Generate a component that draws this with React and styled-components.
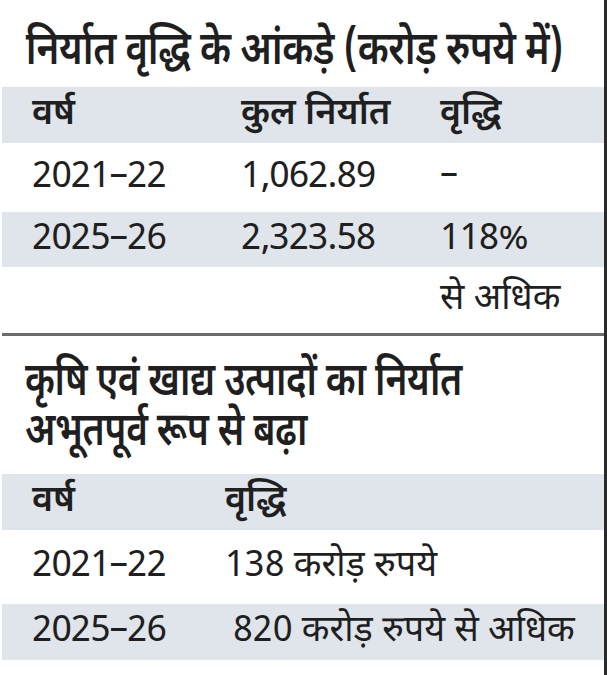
import React from 'react';
import styled, { createGlobalStyle } from 'styled-components';

const GlobalStyle = createGlobalStyle`
    html, body {
        margin: 0;
        padding: 0;
        background: #fff;
    }
    body {
        font-family: "Noto Sans Devanagari", "Lohit Devanagari", "Noto Sans", "Liberation Sans", sans-serif;
        color: #1f1f1f;
    }
`;

const Card = styled.div`
    margin-left: 2px;
    width: 602px;
    height: 675px;
    border-right: 3px solid #2a2a2a;
    background: #fff;
    display: flex;
    flex-direction: column;
    overflow: hidden;
`;

// newspaper headline face is condensed, so squeeze the heading horizontally
const Title = styled.h1`
    margin: 0;
    box-sizing: border-box;
    flex: 0 0 ${(p) => p.$h}px;
    padding: ${(p) => p.$top}px 0 0 29px;
    font-size: 47px;
    font-weight: 600;
    line-height: 50px;
    letter-spacing: -0.5px;
    white-space: nowrap;
    transform: scaleX(${(p) => p.$squeeze});
    transform-origin: left top;
`;

const Row = styled.div`
    display: grid;
    grid-template-columns: ${(p) => p.$cols};
    align-items: center;
    flex: 0 0 ${(p) => p.$h}px;
    padding-left: 30px;
    background: ${(p) => (p.$shade ? '#dfe5ea' : 'transparent')};
    font-size: 36px;
    font-weight: ${(p) => (p.$head ? 600 : 400)};
    white-space: nowrap;
`;

const Cell = styled.span`
    padding-left: ${(p) => p.$indent || 0}px;
`;

const Num = styled.span`
    font-size: 37px;
    letter-spacing: -1px;
`;

const Divider = styled.hr`
    margin: 0;
    border: 0;
    border-top: 3px solid #6b6b6b;
`;

const exportCols = '209px 199px 1fr';
const agriCols = '193px 1fr';

const exportRows = [
    { cells: ['वर्ष', 'कुल निर्यात', 'वृद्धि'], head: true, shade: true, h: 56 },
    { cells: [<Num>2021–22</Num>, <Num>1,062.89</Num>, '–'], h: 69 },
    { cells: [<Num>2025–26</Num>, <Num>2,323.58</Num>, <Num>118%</Num>], shade: true, h: 55 },
    { cells: ['', '', 'से अधिक'], h: 66 },
];

const agriRows = [
    { cells: ['वर्ष', 'वृद्धि'], head: true, shade: true, h: 56 },
    { cells: [<Num>2021–22</Num>, '138 करोड़ रुपये'], h: 74 },
    { cells: [<Num>2025–26</Num>, '820 करोड़ रुपये से अधिक'], shade: true, h: 56, indent: 8 },
];

const App = () => {
    return (
        <>
            <GlobalStyle />
            <Card>
                <Title $h={87} $top={28} $squeeze={0.82}>
                    निर्यात वृद्धि के आंकड़े (करोड़ रुपये में)
                </Title>
                {exportRows.map((row, i) => (
                    <Row key={i} $cols={exportCols} $h={row.h} $shade={row.shade} $head={row.head}>
                        {row.cells.map((c, j) => (
                            <Cell key={j}>{c}</Cell>
                        ))}
                    </Row>
                ))}
                <Divider />
                <Title $h={138} $top={23} $squeeze={0.79}>
                    कृषि एवं खाद्य उत्पादों का निर्यात
                    <br />
                    अभूतपूर्व रूप से बढ़ा
                </Title>
                {agriRows.map((row, i) => (
                    <Row key={i} $cols={agriCols} $h={row.h} $shade={row.shade} $head={row.head}>
                        {row.cells.map((c, j) => (
                            <Cell key={j} $indent={j === 1 ? row.indent : 0}>
                                {c}
                            </Cell>
                        ))}
                    </Row>
                ))}
            </Card>
        </>
    );
};

export default App;
